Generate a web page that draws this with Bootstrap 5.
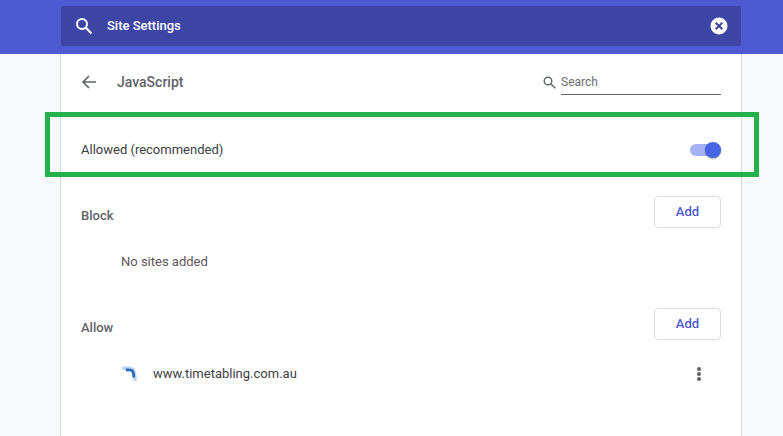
<!DOCTYPE html>
<html lang="en">
<head>
    <meta charset="UTF-8">
    <meta name="viewport" content="width=device-width, initial-scale=1.0">
    <title>Site Settings - JavaScript</title>
    <link href="https://cdn.jsdelivr.net/npm/bootstrap@5.3.0/dist/css/bootstrap.min.css" rel="stylesheet">
    <script src="https://cdn.jsdelivr.net/npm/bootstrap@5.3.0/dist/js/bootstrap.bundle.min.js"></script>

    <style>
        html, body {
            height: 436px;
            overflow: hidden;
        }

        body {
            background: #f8f9fb;
            font-family: Roboto, "Liberation Sans", sans-serif;
            font-size: 13px;
            color: #333;
            position: relative;
        }

        .top-bar {
            background: #4e5ad2;
            height: 54px;
            padding: 6px 42px 8px 61px;
        }

        .search-box {
            background: #3d46a5;
            height: 40px;
            border-radius: 2px;
            padding: 0 13px 0 14px;
            color: #fff;
        }

        .search-title {
            font-size: 13px;
            font-weight: 500;
            margin-left: 14px;
        }

        .settings-panel {
            width: 682px;
            height: 382px;
            margin-left: 60px;
            padding: 0 20px;
            background: #fff;
            border-left: 1px solid #d9d9dc;
            border-right: 1px solid #d9d9dc;
        }

        .sub-head {
            height: 56px;
        }

        .back-arrow {
            margin-right: 20px;
        }

        .page-name {
            font-size: 14px;
            font-weight: 500;
            color: #5f6368;
        }

        .small-search {
            width: 178px;
            height: 25px;
        }

        .small-search span {
            flex: 1;
            height: 25px;
            line-height: 24px;
            margin-left: 5px;
            color: #6d6d72;
            border-bottom: 1px solid #5f6368;
            font-size: 12px;
        }

        .allowed-row {
            height: 78px;
            padding-top: 2px;
            color: #3c4043;
        }

        .toggle-track {
            width: 31px;
            height: 12px;
            border-radius: 6px;
            background: #a5b0f2;
            position: relative;
        }

        .toggle-knob {
            position: absolute;
            right: 0;
            top: -2px;
            width: 16px;
            height: 16px;
            border-radius: 50%;
            background: #4766e6;
            box-shadow: 0 1px 2px rgba(0, 0, 0, .35);
        }

        .list-head {
            height: 32px;
            margin-top: 8px;
        }

        .list-label {
            font-weight: 500;
            color: #5f6368;
            margin-top: 10px;
        }

        .btn-add {
            width: 67px;
            height: 32px;
            padding: 0;
            font-size: 13px;
            font-weight: 500;
            color: #4e5ad2;
            background: #fff;
            border: 1px solid #dadce0;
            border-radius: 4px;
        }

        .empty-note {
            height: 48px;
            line-height: 48px;
            margin: 10px 0 22px 40px;
            color: #5f5558;
        }

        .site-row {
            height: 34px;
            margin-top: 17px;
            padding: 0 20px 0 40px;
            color: #3c4043;
        }

        .site-icon {
            margin-right: 16px;
        }

        .dots {
            width: 4px;
        }

        .dots i {
            display: block;
            width: 4px;
            height: 4px;
            margin: 1px 0;
            border-radius: 50%;
            background: #5f6368;
        }

        /* green annotation drawn over the screenshot */
        .mark-box {
            position: absolute;
            left: 45px;
            top: 112px;
            width: 714px;
            height: 65px;
            border: 5px solid #22b14c;
            pointer-events: none;
        }
    </style>
</head>
<body>

    <!-- Top bar -->
    <div class="top-bar">
        <div class="search-box d-flex align-items-center">
            <svg width="18" height="18" viewBox="0 0 18 18" fill="none" stroke="#fff" stroke-width="2">
                <circle cx="7" cy="7" r="5"/>
                <path d="M10.8 10.8 16.5 16.5"/>
            </svg>
            <div class="search-title flex-grow-1">Site Settings</div>
            <svg width="18" height="18" viewBox="0 0 18 18">
                <circle cx="9" cy="9" r="8.5" fill="#fff"/>
                <path d="M5.7 5.7 12.3 12.3M12.3 5.7 5.7 12.3" stroke="#3d46a5" stroke-width="2"/>
            </svg>
        </div>
    </div>

    <!-- Settings panel -->
    <div class="settings-panel">
        <div class="sub-head d-flex align-items-center justify-content-between">
            <div class="d-flex align-items-center">
                <svg class="back-arrow" width="16" height="16" viewBox="0 0 16 16" fill="none" stroke="#5f6368" stroke-width="1.6">
                    <path d="M15 8H2M8 2 2 8l6 6"/>
                </svg>
                <span class="page-name">JavaScript</span>
            </div>
            <div class="small-search d-flex align-items-center">
                <svg width="13" height="13" viewBox="0 0 13 13" fill="none" stroke="#5f6368" stroke-width="1.4">
                    <circle cx="5" cy="5" r="3.8"/>
                    <path d="M8 8 12.3 12.3"/>
                </svg>
                <span>Search</span>
            </div>
        </div>

        <div class="allowed-row d-flex align-items-center justify-content-between">
            <span>Allowed (recommended)</span>
            <div class="toggle-track"><div class="toggle-knob"></div></div>
        </div>

        <div class="list-head d-flex align-items-start justify-content-between">
            <div class="list-label">Block</div>
            <button class="btn btn-add">Add</button>
        </div>
        <div class="empty-note">No sites added</div>

        <div class="list-head d-flex align-items-start justify-content-between">
            <div class="list-label">Allow</div>
            <button class="btn btn-add">Add</button>
        </div>

        <div class="site-row d-flex align-items-center">
            <svg class="site-icon" width="16" height="16" viewBox="0 0 16 16" fill="none">
                <path d="M1 2.5C6 1.5 10 2 12 3.5 13.5 5.5 14 9 14 15" stroke="#bcd5ef" stroke-width="3.6"/>
                <path d="M5 4C8 3.6 10.5 4 11.5 5 12.5 6.5 12.8 9 12.8 11.5" stroke="#2a68bb" stroke-width="2.8"/>
            </svg>
            <span class="flex-grow-1">www.timetabling.com.au</span>
            <div class="dots"><i></i><i></i><i></i></div>
        </div>
    </div>

    <div class="mark-box"></div>

</body>
</html>
